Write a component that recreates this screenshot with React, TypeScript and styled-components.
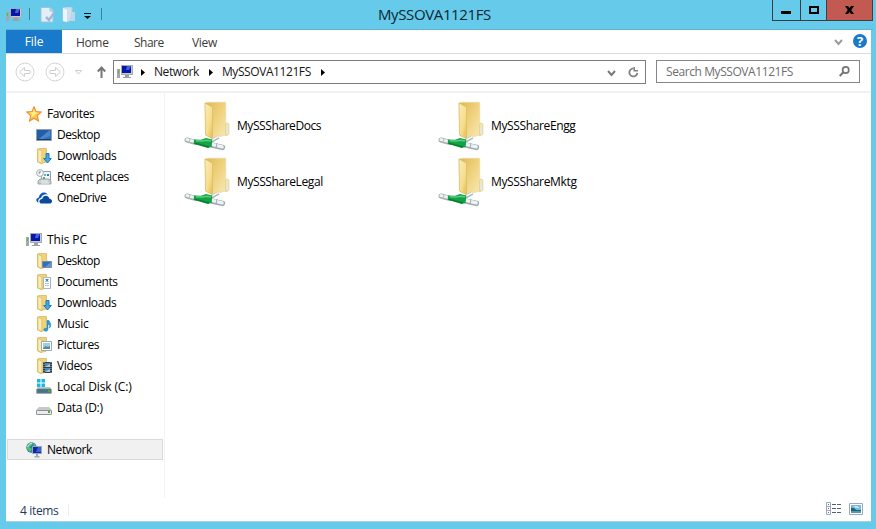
import React, { useId } from 'react';
import styled, { createGlobalStyle } from 'styled-components';

const GlobalStyle = createGlobalStyle`
  * { box-sizing: border-box; }
  html, body { margin: 0; padding: 0; overflow: hidden; }
  body { font-family: "Open Sans", "Noto Sans", sans-serif; font-size: 12px; color: #000; }
`;

const WindowFrame = styled.main`
  width: 876px;
  height: 529px;
  padding: 0 5px 7px 6px;
  background: #66caea;
  display: flex;
  flex-direction: column;
`;

const TitleBar = styled.header`
  height: 30px;
  flex: none;
  display: grid;
  grid-template-columns: 372px 1fr 101px;
  margin-right: -2px;
  border-bottom: 1px solid #62b3cf;
`;

const QuickAccess = styled.div`
  display: flex;
  align-items: flex-start;
  padding-top: 7px;
`;

const QuickDivider = styled.span<{ $left: number }>`
  width: 1px;
  height: 12px;
  margin: 1px 0 0 ${p => p.$left}px;
  background: #3f7f96;
`;

const IconSlot = styled.span<{ $left?: number; $top?: number }>`
  display: flex;
  flex: none;
  margin-left: ${p => p.$left ?? 0}px;
  margin-top: ${p => p.$top ?? 0}px;
`;

const Title = styled.h1`
  margin: 0;
  font-size: 15px;
  font-weight: 400;
  line-height: 29px;
  letter-spacing: -0.38px;
  color: #0c2730;
  white-space: nowrap;
`;

const WindowButtons = styled.div`
  display: flex;
  height: 21px;
  border: 1px solid #3d3d42;
  border-top: 0;
`;

const WindowButton = styled.button<{ $width: number; $close?: boolean }>`
  width: ${p => p.$width}px;
  padding: 0;
  border: 0;
  background: ${p => (p.$close ? '#c35a51' : 'transparent')};
  display: flex;

  & + & { border-left: 1px solid #3d3d42; }
`;

const Client = styled.div`
  flex: 1;
  min-height: 0;
  background: #fff;
  border-bottom: 1px solid #a8cfdc;
  display: flex;
  flex-direction: column;
`;

const Ribbon = styled.nav`
  height: 24px;
  flex: none;
  display: flex;
  border-bottom: 1px solid #dadbdc;
`;

const FileTab = styled.a`
  width: 56px;
  height: 23px;
  background: #1979ca;
  color: #fff;
  text-align: center;
  line-height: 24px;
  letter-spacing: -0.1px;
`;

const RibbonTab = styled.a<{ $left: number; $width: number; $spacing: number }>`
  margin-left: ${p => p.$left}px;
  width: ${p => p.$width}px;
  color: #3b3b3b;
  line-height: 26px;
  letter-spacing: ${p => p.$spacing}px;
  white-space: nowrap;
`;

const RibbonTools = styled.div`
  margin-left: auto;
  display: flex;
`;

const NavigationBar = styled.div`
  height: 39px;
  flex: none;
  display: flex;
  border-bottom: 2px solid #f1f1f1;
`;

const NavButtons = styled.div`
  width: 107px;
  display: flex;
`;

const AddressBox = styled.div`
  width: 533px;
  height: 24px;
  margin-top: 6px;
  border: 1px solid #7d7d7d;
  display: flex;
  align-items: flex-start;
`;

const Crumb = styled.span<{ $left: number; $spacing: number; $width: number }>`
  margin-left: ${p => p.$left}px;
  width: ${p => p.$width}px;
  line-height: 22px;
  white-space: nowrap;
  letter-spacing: ${p => p.$spacing}px;
  color: #161616;
`;

const SearchBox = styled.div`
  width: 204px;
  height: 23px;
  margin: 6px 0 0 10px;
  border: 1px solid #868686;
  padding-left: 9px;
  display: flex;
  color: #6e6e6e;
  line-height: 22px;
  letter-spacing: -0.42px;
`;

const Body = styled.div`
  flex: 1;
  min-height: 0;
  display: flex;
`;

const Sidebar = styled.aside`
  width: 159px;
  padding: 10px 1px 0;
  border-right: 1px solid #f3f3f3;
`;

const NavRow = styled.div<{ $child?: boolean; $selected?: boolean; $gap?: boolean }>`
  height: 21px;
  margin-top: ${p => (p.$gap ? 21 : 0)}px;
  padding-left: ${p => (p.$child ? 28 : 18)}px;
  border: 1px solid ${p => (p.$selected ? '#dadada' : 'transparent')};
  background: ${p => (p.$selected ? '#f1f1f1' : 'transparent')};
  display: flex;
  align-items: center;
`;

const NavText = styled.span<{ $spacing: number }>`
  margin-left: 5px;
  line-height: 19px;
  white-space: nowrap;
  letter-spacing: ${p => p.$spacing}px;
`;

const FileGrid = styled.section`
  display: grid;
  grid-template-columns: 254px 254px;
  grid-auto-rows: 56px;
  padding: 5px 0 0 18px;
`;

const FileTile = styled.div`
  display: flex;
  align-items: center;
`;

const FileName = styled.span<{ $spacing: number }>`
  margin-left: 6px;
  letter-spacing: ${p => p.$spacing}px;
  line-height: 18px;
`;

const StatusBar = styled.footer`
  height: 23px;
  flex: none;
  display: flex;
  padding-left: 14px;
`;

const StatusText = styled.span`
  width: 49px;
  height: 12px;
  margin-top: 6px;
  border-right: 1px solid #ededed;
  color: #1e395b;
  line-height: 14px;
  letter-spacing: -0.35px;
`;

const ViewModes = styled.div`
  margin: 4px 8px 0 auto;
  display: flex;
  gap: 7px;
`;

const HelpIcon = styled.span`
  width: 14px;
  height: 14px;
  border-radius: 50%;
  background: #1979ca;
  color: #fff;
  font-weight: 700;
  font-size: 13px;
  line-height: 14px;
  text-align: center;
`;

const SearchGlyph = styled.span`
  display: flex;
  margin: 5px 9px 0 auto;
`;

const Computer = () => (
  <svg width="16" height="16" viewBox="0 0 16 16">
    <path d="M0 5h3v9H0z" fill="#a4a8aa" /><path d="M1 6h1v3H1z" fill="#41c92f" />
    <path d="M4 1h12v10H4z" fill="#c7cacb" /><path d="M4.5 1.5h11v9h-11z" fill="none" stroke="#a5acb2" />
    <path d="M5 2h9v7H5z" fill="#0917a5" /><path d="M10 2h4l-2 4H9z" fill="#3c65df" />
    <path d="M8 11h4v2h2v1H6v-1h2z" fill="#9ea1a3" />
  </svg>
);

const Star = () => (
  <svg width="16" height="16" viewBox="0 0 16 16">
    <path d="m8 .8 2 4.8 5.2.5-3.9 3.6 1.2 5.3L8 12.2 3.5 15l1.2-5.3L.8 6.1 6 5.6Z" fill="#ffc84c" stroke="#ed8d31" strokeWidth="1.1" />
    <path d="m8 3 1.2 3.5 3.1.3-3.2 1.5L8 10 5 11l1-3-2.5-1.5 3.3-.2z" fill="#fff08a" />
  </svg>
);

const Desktop = () => (
  <svg width="16" height="16" viewBox="0 0 16 16">
    <path d="M.5 2.5h15v11H.5z" fill="#316fba" stroke="#92a0ad" />
    <path d="M1 3h13L3 12H1z" fill="#235da8" /><path d="M14 3v6L7 12H3z" fill="#4d87ca" />
    <path d="M1 12h14v1H1z" fill="#183e68" />
  </svg>
);

type Badge = 'none' | 'desktop' | 'document' | 'download' | 'music' | 'picture' | 'video';

const FolderIcon = ({ badge = 'none' }: { badge?: Badge }) => (
  <svg width="16" height="16" viewBox="0 0 16 16">
    <path d="M1.5 1 4 .5h6.5V14L5 15.5 1.5 14Z" fill="#efd37a" stroke="#d9b75f" strokeWidth=".8" />
    <path d="m1.8 1.3 4 1.8V15.3L2 13.9z" fill="#fbecb2" stroke="#d5b45b" strokeWidth=".6" />
    <path d="M10 7h2v6h-2z" fill="#e7d091" />
    {badge === 'download' && <path d="M10 5.5h3v5h2.3L11.5 15 7.7 10.5H10z" fill="#41a8eb" stroke="#2177b5" />}
    {badge === 'desktop' && <><path d="M6.5 8.5h9v6h-9z" fill="#326fb8" stroke="#718fad" /><path d="m15 9-6 5h6z" fill="#6598cc" /></>}
    {badge === 'document' && <><path d="M7.5 3.5h7v11h-7z" fill="#fff" stroke="#a5b5c3" /><path d="M9 5.5h4M9 7.5h4M9 9.5h4M9 11.5h4" stroke="#b4c2d2" /><path d="M10 5h2v2h-2z" fill="#328dd2" /></>}
    {badge === 'music' && <path d="M11 4.5v8c-4-1.5-4 3-1 2.7 1.7-.2 2-1.5 2-2.5V8c2 1 2 2 1.4 4 2.7-3.4.8-4.6-.4-7.5z" fill="#299fdf" stroke="#1974ac" strokeWidth=".5" />}
    {badge === 'picture' && <><path d="M5.5 4.5h10v9h-10z" fill="#fff" stroke="#9aa9b4" /><path d="M7 6h7v6H7z" fill="#9bcee4" /><path d="m7 11 3-2 2 1 2-1v3H7z" fill="#528e8d" /></>}
    {badge === 'video' && <><path d="M7 4h9v11H7z" fill="#333c44" /><path d="M9 5h5v4H9zM9 10h5v4H9z" fill="#438cc6" /><path d="m9 9 5-3v3zM9 14l5-3v3z" fill="#b3c9d6" /><path d="M8 4v11M15 4v11" stroke="#b1b5b7" strokeDasharray="1 1" /></>}
  </svg>
);

const Recent = () => (
  <svg width="16" height="16" viewBox="0 0 16 16">
    <path d="M5.5 2.5h9v9h-9z" fill="#f3f5f6" stroke="#929da4" />
    <path d="M8 5h2v2H8z" fill="#5cb4d8" /><path d="M11 5h2v2h-2z" fill="#327bb3" /><path d="M7 8h2v2H7z" fill="#50b17d" />
    <path d="m3 11 1-1h9l2 2v3H2v-3z" fill="#c6cbce" stroke="#8e999f" strokeWidth=".8" />
    <path d="M5 12h7M5 14h8" stroke="#f4f5f6" /><circle cx="4" cy="4" r="3.4" fill="#f9fafa" stroke="#a6adb1" />
    <path d="M4 2v2H2.5" fill="none" stroke="#737d87" />
  </svg>
);

const OneDrive = () => (
  <svg width="16" height="16" viewBox="0 0 16 16">
    <path d="M2.5 12.5C-.5 11.4-.4 8 2.7 7.7 3.6 2.9 8.5.7 11.8 4.6 8.5 3.7 6 5 5.2 7.7 2.7 8 1.7 10.4 2.5 12.5z" fill="#0759b9" />
    <path d="M4.8 13.5c-2.7-1.6-1.1-4.8 1.4-4.5.8-4 6.2-4.3 7.3-.2 3.3.2 3.3 4.5.6 4.7z" fill="#0b4b9e" />
  </svg>
);

const Disk = ({ windows = false }: { windows?: boolean }) => (
  <svg width="16" height="16" viewBox="0 0 16 16">
    <path d={windows ? 'M2 8h12l2 3v4H0v-4z' : 'm3 7-3 3v4q0 1 2 1h12q2 0 2-1v-4l-3-3z'} fill="#c6c9ca" />
    <path d={windows ? 'M1 10h14v4H1z' : 'M1.5 10.5h13q1 0 1 1v2q0 1-1 1h-13q-1 0-1-1v-2q0-1 1-1z'} fill={windows ? '#39788b' : '#ececf0'} stroke="#777f82" strokeWidth=".8" />
    <path d="M12 11h2v2h-2z" fill="#38ba28" />
    {windows && <path d="M1 0h3.5v3.5H1zM5.5 0H9v3.5H5.5zM1 4.5h3.5V8H1zM5.5 4.5H9V8H5.5z" fill="#18b8e9" />}
  </svg>
);

const NetworkIcon = () => (
  <svg width="16" height="16" viewBox="0 0 16 16">
    <circle cx="5.5" cy="5.5" r="5.2" fill="#1f7fc8" />
    <path d="M1 3 4 .5l3 .5-1 2-3 2 3 2-2 3-3-3zM7 1l3 2-2 2z" fill="#65bf55" />
    <path d="M3 2.5 6 1M1.5 5 3 3" stroke="#d0efe9" />
    <path d="M6.5 4.5h9v7h-9z" fill="#1026a6" stroke="#9aa8b5" /><path d="M12 5h3v5h-5z" fill="#3662df" />
    <path d="M10 12h2v2h1.5v1.5h-5V14H10z" fill="#a1aab0" />
  </svg>
);

const SharedFolder = () => {
  const id = useId().replace(/:/g, '');
  return (
    <svg width="48" height="52" viewBox="0 0 48 52">
      <defs>
        <linearGradient id={`${id}b`} x1="0" y1="0" x2="1" y2="1"><stop stopColor="#ddb955" /><stop offset=".5" stopColor="#efd27d" /><stop offset="1" stopColor="#f8e9b4" /></linearGradient>
        <linearGradient id={`${id}f`} x1="0" y1="0" x2=".8" y2="1"><stop stopColor="#faeebb" /><stop offset=".65" stopColor="#f7dd8c" /><stop offset="1" stopColor="#e7c35e" /></linearGradient>
      </defs>
      <path d="m22 3 3-.7h17.7V35L30 38.4l-7-3.2z" fill={`url(#${id}b)`} stroke="#edd99a" strokeWidth=".7" />
      <path d="m42.7 24 1.5-1 1.7 1v10.3L42.7 36z" fill="#f6e8b4" stroke="#d8c382" strokeWidth=".6" />
      <path d="M43.5 27H45v6l-1.5.6z" fill="#d5edf5" />
      <path d="m22 3 7.5 4.2v31.5l-7-3.7z" fill={`url(#${id}f)`} stroke="#d8ba66" strokeWidth=".7" />
      <path d="m27 42 8.5-5" stroke="#aab5ba" strokeWidth="3.4" /><path d="m27 41.3 8.5-4.8" stroke="#f2f5f5" strokeWidth="1.7" />
      <path d="m4 40 9 2.5" stroke="#a8afb3" strokeWidth="5" strokeLinecap="round" /><path d="m4 39.6 9 2.3" stroke="#edf2f3" strokeWidth="3" strokeLinecap="round" />
      <path d="m28 44.8 11.4 2.6" stroke="#a0a9af" strokeWidth="5.4" strokeLinecap="round" /><path d="m28 44.2 11.2 2.6" stroke="#edf2f3" strokeWidth="3.3" strokeLinecap="round" />
      <path d="m34 43.3-1 4.8" stroke="#9eaab0" /><path d="m7 38.3-.8 4" stroke="#b6c0c3" />
      <path d="m11 39.6 7 .2 5-1.9 6.3 1.6-.6 7.3-4 1.2-14-4.2z" fill="#13a246" />
      <path d="m13 40.7 6 .4 5-.8 4 .7" fill="none" stroke="#58d07c" strokeWidth="1.5" /><path d="m11.5 43.2 14.5 3.8" stroke="#087d31" strokeWidth="1.3" />
    </svg>
  );
};

const Triangle = () => <svg width="4" height="7" viewBox="0 0 4 7"><path d="m0 0 4 3.5L0 7z" fill="#000" /></svg>;

const Chevron = ({ color = '#868686' }: { color?: string }) => (
  <svg width="9" height="7" viewBox="0 0 9 7"><path d="m1 1 3.5 4L8 1" fill="none" stroke={color} strokeWidth="1.9" /></svg>
);

const HistoryArrow = ({ forward = false }: { forward?: boolean }) => (
  <svg width="20" height="20" viewBox="0 0 20 20">
    <circle cx="10" cy="10" r="9" fill="none" stroke="#d5d5d5" />
    <path transform={forward ? 'rotate(180 10 10)' : undefined} d="m4.5 10 5-4.5v3H15v3H9.5v3z" fill="none" stroke="#cecece" />
  </svg>
);

interface NavEntry { label: string; icon: React.ReactNode; child?: boolean; gap?: boolean; selected?: boolean; spacing?: number; }

const navigation: NavEntry[] = [
  { label: 'Favorites', icon: <Star />, spacing: -0.38 },
  { label: 'Desktop', icon: <Desktop />, child: true, spacing: -0.48 },
  { label: 'Downloads', icon: <FolderIcon badge="download" />, child: true, spacing: -0.36 },
  { label: 'Recent places', icon: <Recent />, child: true, spacing: -0.36 },
  { label: 'OneDrive', icon: <OneDrive />, child: true, spacing: -0.45 },
  { label: 'This PC', icon: <Computer />, gap: true, spacing: -0.1 },
  { label: 'Desktop', icon: <FolderIcon badge="desktop" />, child: true, spacing: -0.48 },
  { label: 'Documents', icon: <FolderIcon badge="document" />, child: true, spacing: -0.4 },
  { label: 'Downloads', icon: <FolderIcon badge="download" />, child: true, spacing: -0.36 },
  { label: 'Music', icon: <FolderIcon badge="music" />, child: true },
  { label: 'Pictures', icon: <FolderIcon badge="picture" />, child: true, spacing: -0.36 },
  { label: 'Videos', icon: <FolderIcon badge="video" />, child: true, spacing: -0.36 },
  { label: 'Local Disk (C:)', icon: <Disk windows />, child: true, spacing: -0.14 },
  { label: 'Data (D:)', icon: <Disk />, child: true, spacing: -0.3 },
  { label: 'Network', icon: <NetworkIcon />, gap: true, selected: true, spacing: -0.42 },
];

const shares = [
  { name: 'MySSShareDocs', spacing: -0.42 },
  { name: 'MySSShareEngg', spacing: -0.37 },
  { name: 'MySSShareLegal', spacing: -0.4 },
  { name: 'MySSShareMktg', spacing: -0.35 },
];

export default function App() {
  return (
    <>
      <GlobalStyle />
      <WindowFrame>
        <TitleBar>
          <QuickAccess>
            <IconSlot><Computer /></IconSlot>
            <QuickDivider $left={7} />
            <IconSlot $left={10}><svg width="16" height="16" viewBox="0 0 16 16"><path d="M1 .5h9l3 3V15H1z" fill="#e4eef7" stroke="#9fc3da" /><path d="M10 .5V4h3" fill="#bed6e8" stroke="#9fc3da" /><path d="m6 10 3 3 5-7" fill="none" stroke="#a3bad3" strokeWidth="2.5" /></svg></IconSlot>
            <IconSlot $left={6}><svg width="14" height="16" viewBox="0 0 14 16"><path d="m1 1 3-1h6v13l-5 2-4-1z" fill="#cbdfed" stroke="#a9ccde" /><path d="m1 1 4 2v12l-4-1z" fill="#edf5fa" /><path d="M10 5h3v9H7z" fill="#bdd7e8" /></svg></IconSlot>
            <IconSlot $left={8} $top={6}><svg width="7" height="6" viewBox="0 0 7 6"><path d="M0 0h7v1H0zM0 3h7L3.5 6z" fill="#111" /></svg></IconSlot>
            <QuickDivider $left={10} />
          </QuickAccess>
          <Title>MySSOVA1121FS</Title>
          <WindowButtons>
            <WindowButton aria-label="Minimize" $width={27}><IconSlot $left={8} $top={11}><svg width="10" height="3"><path d="M0 0h10v3H0z" /></svg></IconSlot></WindowButton>
            <WindowButton aria-label="Maximize" $width={26}><IconSlot $left={8} $top={6}><svg width="10" height="8"><path d="M1 1h8v6H1z" fill="none" stroke="#000" strokeWidth="2" /></svg></IconSlot></WindowButton>
            <WindowButton aria-label="Close" $width={46} $close><IconSlot $left={18} $top={6}><svg width="9" height="8" viewBox="0 0 9 8"><path d="M0 0h3l1.5 2L6 0h3L6.3 4 9 8H6L4.5 6 3 8H0l2.7-4z" /></svg></IconSlot></WindowButton>
          </WindowButtons>
        </TitleBar>
        <Client>
          <Ribbon>
            <FileTab>File</FileTab>
            <RibbonTab $left={14} $width={44} $spacing={-0.9 + 0.55}>Home</RibbonTab>
            <RibbonTab $left={14} $width={44} $spacing={-0.5}>Share</RibbonTab>
            <RibbonTab $left={14} $width={44} $spacing={-0.3}>View</RibbonTab>
            <RibbonTools>
              <IconSlot $top={9}><Chevron color="#9a9a9a" /></IconSlot>
              <IconSlot $left={10} $top={4}><HelpIcon>?</HelpIcon></IconSlot>
              <IconSlot $left={4} />
            </RibbonTools>
          </Ribbon>
          <NavigationBar>
            <NavButtons>
              <IconSlot $left={9} $top={8}><HistoryArrow /></IconSlot>
              <IconSlot $left={10} $top={8}><HistoryArrow forward /></IconSlot>
              <IconSlot $left={10} $top={16}><svg width="7" height="5" viewBox="0 0 7 5"><path d="M.5.5h6l-3 3.5z" fill="none" stroke="#cdcdcd" /></svg></IconSlot>
              <IconSlot $left={15} $top={12}><svg width="9" height="12" viewBox="0 0 9 12"><path d="M4.5 12V2M.8 5.5l3.7-4 3.7 4" fill="none" stroke="#777" strokeWidth="2" /></svg></IconSlot>
            </NavButtons>
            <AddressBox>
              <IconSlot $left={3} $top={3}><Computer /></IconSlot>
              <IconSlot $left={8} $top={8}><Triangle /></IconSlot>
              <Crumb $left={9} $width={46} $spacing={-0.42}>Network</Crumb>
              <IconSlot $left={9} $top={8}><Triangle /></IconSlot>
              <Crumb $left={9} $width={91} $spacing={-0.42}>MySSOVA1121FS</Crumb>
              <IconSlot $left={8} $top={8}><Triangle /></IconSlot>
              <IconSlot $left={282} $top={9}><Chevron color="#777" /></IconSlot>
              <IconSlot $left={12} $top={6}><svg width="11" height="11" viewBox="0 0 11 11"><path d="M7 1.8A4 4 0 1 0 9.3 6" fill="none" stroke="#808080" strokeWidth="1.8" /><path d="M5.5 0h4.5v5H5.5z" fill="#fff" /><path d="M5.5 0H7v3h3v1.6H5.5z" fill="#808080" /></svg></IconSlot>
            </AddressBox>
            <SearchBox>
              Search MySSOVA1121FS
              <SearchGlyph><svg width="11" height="11" viewBox="0 0 11 11"><circle cx="6.7" cy="4" r="3.1" fill="none" stroke="#747474" strokeWidth="1.7" /><path d="M4.4 6.3.7 10" stroke="#747474" strokeWidth="2" /></svg></SearchGlyph>
            </SearchBox>
          </NavigationBar>
          <Body>
            <Sidebar>
              {navigation.map((item, i) => (
                <NavRow key={i} $child={item.child} $gap={item.gap} $selected={item.selected}>
                  {item.icon}<NavText $spacing={item.spacing ?? -0.2}>{item.label}</NavText>
                </NavRow>
              ))}
            </Sidebar>
            <FileGrid>
              {shares.map(share => <FileTile key={share.name}><SharedFolder /><FileName $spacing={share.spacing}>{share.name}</FileName></FileTile>)}
            </FileGrid>
          </Body>
          <StatusBar>
            <StatusText>4 items</StatusText>
            <ViewModes>
              <svg width="16" height="13" viewBox="0 0 16 13"><path d="M.5.5h4v12h-4zM.5 4.5h4M.5 8.5h4" fill="#fff" stroke="#9ca8b7" /><path d="M6 2.5h4m1 0h4m-9 4h4m1 0h4m-9 4h4m1 0h4" stroke="#52617a" /><path d="M2 2h1v1H2zm0 8h1v1H2z" fill="#487db8" /><path d="M2 6h1v1H2z" fill="#d52b2b" /></svg>
              <svg width="14" height="13" viewBox="0 0 14 13"><path d="M.5 1.5h13v11H.5z" fill="#fff" stroke="#9ba9ba" /><path d="M2 3h10v8H2z" fill="#75b8e0" /><path d="m4 5 3-1 3 1v1z" fill="#e5f4fa" /><path d="M2 6q3-1 5 2h5v1H2z" fill="#206374" /><path d="M2 9h10v2H2z" fill="#4c9bb3" /></svg>
            </ViewModes>
          </StatusBar>
        </Client>
      </WindowFrame>
    </>
  );
}
